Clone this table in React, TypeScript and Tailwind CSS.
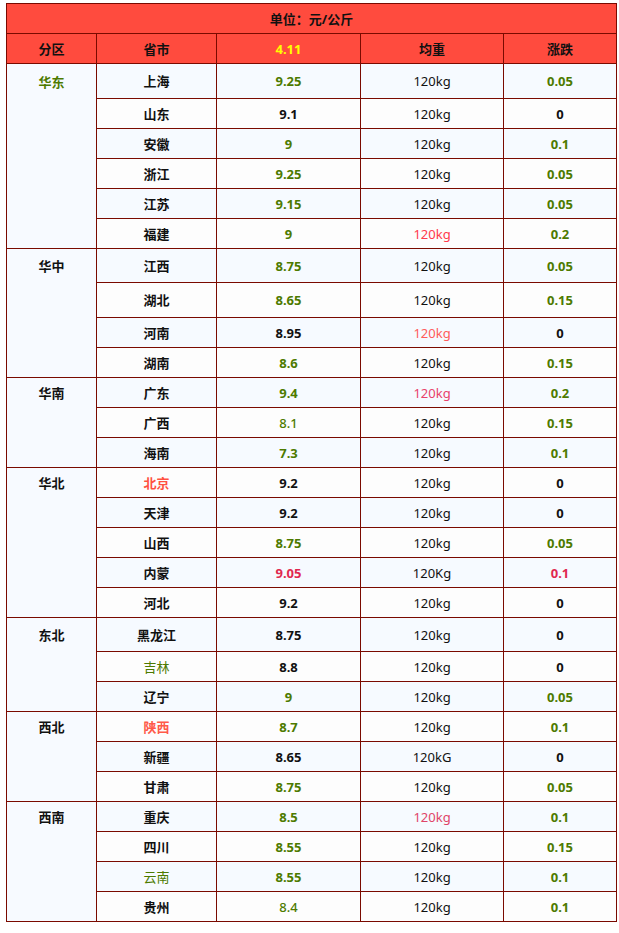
const GREEN = "text-[#4d7a00]";
const BLACK = "text-[#111]";

type Row = {
  city: string;
  cityColor?: string;
  price: string;
  priceColor: string;
  priceBold?: boolean;
  weight: string;
  weightColor?: string;
  change: string;
  changeColor: string;
  h: string;
};

type Region = { name: string; nameColor?: string; rows: Row[] };

const g = GREEN;
const b = BLACK;

const regions: Region[] = [
  {
    name: "华东",
    nameColor: GREEN,
    rows: [
      { city: "上海", price: "9.25", priceColor: g, weight: "120kg", change: "0.05", changeColor: g, h: "h-[35px]" },
      { city: "山东", price: "9.1", priceColor: b, weight: "120kg", change: "0", changeColor: b, h: "h-[30px]" },
      { city: "安徽", price: "9", priceColor: g, weight: "120kg", change: "0.1", changeColor: g, h: "h-[30px]" },
      { city: "浙江", price: "9.25", priceColor: g, weight: "120kg", change: "0.05", changeColor: g, h: "h-[30px]" },
      { city: "江苏", price: "9.15", priceColor: g, weight: "120kg", change: "0.05", changeColor: g, h: "h-[30px]" },
      { city: "福建", price: "9", priceColor: g, weight: "120kg", weightColor: "text-[#ff3a4c]", change: "0.2", changeColor: g, h: "h-[30px]" },
    ],
  },
  {
    name: "华中",
    rows: [
      { city: "江西", price: "8.75", priceColor: g, weight: "120kg", change: "0.05", changeColor: g, h: "h-[34px]" },
      { city: "湖北", price: "8.65", priceColor: g, weight: "120kg", change: "0.15", changeColor: g, h: "h-[35px]" },
      { city: "河南", price: "8.95", priceColor: b, weight: "120kg", weightColor: "text-[#ff5b5b]", change: "0", changeColor: b, h: "h-[30px]" },
      { city: "湖南", price: "8.6", priceColor: g, weight: "120kg", change: "0.15", changeColor: g, h: "h-[30px]" },
    ],
  },
  {
    name: "华南",
    rows: [
      { city: "广东", price: "9.4", priceColor: g, weight: "120kg", weightColor: "text-[#e8416a]", change: "0.2", changeColor: g, h: "h-[30px]" },
      { city: "广西", price: "8.1", priceColor: g, priceBold: false, weight: "120kg", change: "0.15", changeColor: g, h: "h-[30px]" },
      { city: "海南", price: "7.3", priceColor: g, weight: "120kg", change: "0.1", changeColor: g, h: "h-[30px]" },
    ],
  },
  {
    name: "华北",
    rows: [
      { city: "北京", cityColor: "text-[#ff5040]", price: "9.2", priceColor: b, weight: "120kg", change: "0", changeColor: b, h: "h-[30px]" },
      { city: "天津", price: "9.2", priceColor: b, weight: "120kg", change: "0", changeColor: b, h: "h-[30px]" },
      { city: "山西", price: "8.75", priceColor: g, weight: "120kg", change: "0.05", changeColor: g, h: "h-[30px]" },
      { city: "内蒙", price: "9.05", priceColor: "text-[#e0284f]", weight: "120Kg", change: "0.1", changeColor: "text-[#e0284f]", h: "h-[30px]" },
      { city: "河北", price: "9.2", priceColor: b, weight: "120kg", change: "0", changeColor: b, h: "h-[30px]" },
    ],
  },
  {
    name: "东北",
    rows: [
      { city: "黑龙江", price: "8.75", priceColor: b, weight: "120kg", change: "0", changeColor: b, h: "h-[34px]" },
      { city: "吉林", cityColor: "text-[#4d7a00] font-normal", price: "8.8", priceColor: b, weight: "120kg", change: "0", changeColor: b, h: "h-[30px]" },
      { city: "辽宁", price: "9", priceColor: g, weight: "120kg", change: "0.05", changeColor: g, h: "h-[30px]" },
    ],
  },
  {
    name: "西北",
    rows: [
      { city: "陕西", cityColor: "text-[#ff5a4a]", price: "8.7", priceColor: g, weight: "120kg", change: "0.1", changeColor: g, h: "h-[30px]" },
      { city: "新疆", price: "8.65", priceColor: b, weight: "120kG", change: "0", changeColor: b, h: "h-[30px]" },
      { city: "甘肃", price: "8.75", priceColor: g, weight: "120kg", change: "0.05", changeColor: g, h: "h-[30px]" },
    ],
  },
  {
    name: "西南",
    rows: [
      { city: "重庆", price: "8.5", priceColor: g, weight: "120kg", weightColor: "text-[#e04468]", change: "0.1", changeColor: g, h: "h-[30px]" },
      { city: "四川", price: "8.55", priceColor: g, weight: "120kg", change: "0.15", changeColor: g, h: "h-[30px]" },
      { city: "云南", cityColor: "text-[#4d7a00] font-normal", price: "8.55", priceColor: g, weight: "120kg", change: "0.1", changeColor: g, h: "h-[30px]" },
      { city: "贵州", price: "8.4", priceColor: g, priceBold: false, weight: "120kg", change: "0.1", changeColor: g, h: "h-[30px]" },
    ],
  },
];

const cell = "border border-[#7a0a00] text-center align-middle p-0";

export default function App() {
  let idx = 0;
  return (
    <div className="min-h-[933px] bg-white pt-[3px] pl-[6px] font-['Noto_Sans','Noto_Sans_CJK_SC',sans-serif] text-[13px] leading-[18px] text-[#111]">
      <table className="w-[610px] table-fixed border-collapse border border-[#7a0a00]">
        <colgroup>
          <col className="w-[90px]" />
          <col className="w-[120px]" />
          <col className="w-[144px]" />
          <col className="w-[143px]" />
          <col className="w-[113px]" />
        </colgroup>
        <thead>
          <tr className="h-[30px] bg-[#ff4b3e]">
            <th colSpan={5} className={`${cell} font-bold`}>
              单位：元/公斤
            </th>
          </tr>
          <tr className="h-[30px] bg-[#ff4b3e]">
            <th className={`${cell} font-bold`}>分区</th>
            <th className={`${cell} font-bold`}>省市</th>
            <th className={`${cell} font-bold text-[#ffff00]`}>4.11</th>
            <th className={`${cell} font-bold`}>均重</th>
            <th className={`${cell} font-bold`}>涨跌</th>
          </tr>
        </thead>
        <tbody>
          {regions.map((region) =>
            region.rows.map((row, i) => {
              const bg = idx++ % 2 === 0 ? "bg-[#f6faff]" : "bg-[#fdfdfd]";
              return (
                <tr key={row.city} className={`${row.h} ${bg}`}>
                  {i === 0 && (
                    <td rowSpan={region.rows.length} className={`${cell} align-top bg-[#f7faff]`}>
                      <div className={`flex ${row.h} items-center justify-center font-bold ${region.nameColor ?? ""}`}>
                        {region.name}
                      </div>
                    </td>
                  )}
                  <td className={`${cell} font-bold ${row.cityColor ?? ""}`}>{row.city}</td>
                  <td className={`${cell} ${row.priceBold === false ? "font-medium" : "font-bold"} ${row.priceColor}`}>
                    {row.price}
                  </td>
                  <td className={`${cell} ${row.weightColor ?? "text-[#111]"}`}>{row.weight}</td>
                  <td className={`${cell} font-bold ${row.changeColor}`}>{row.change}</td>
                </tr>
              );
            })
          )}
        </tbody>
      </table>
    </div>
  );
}
